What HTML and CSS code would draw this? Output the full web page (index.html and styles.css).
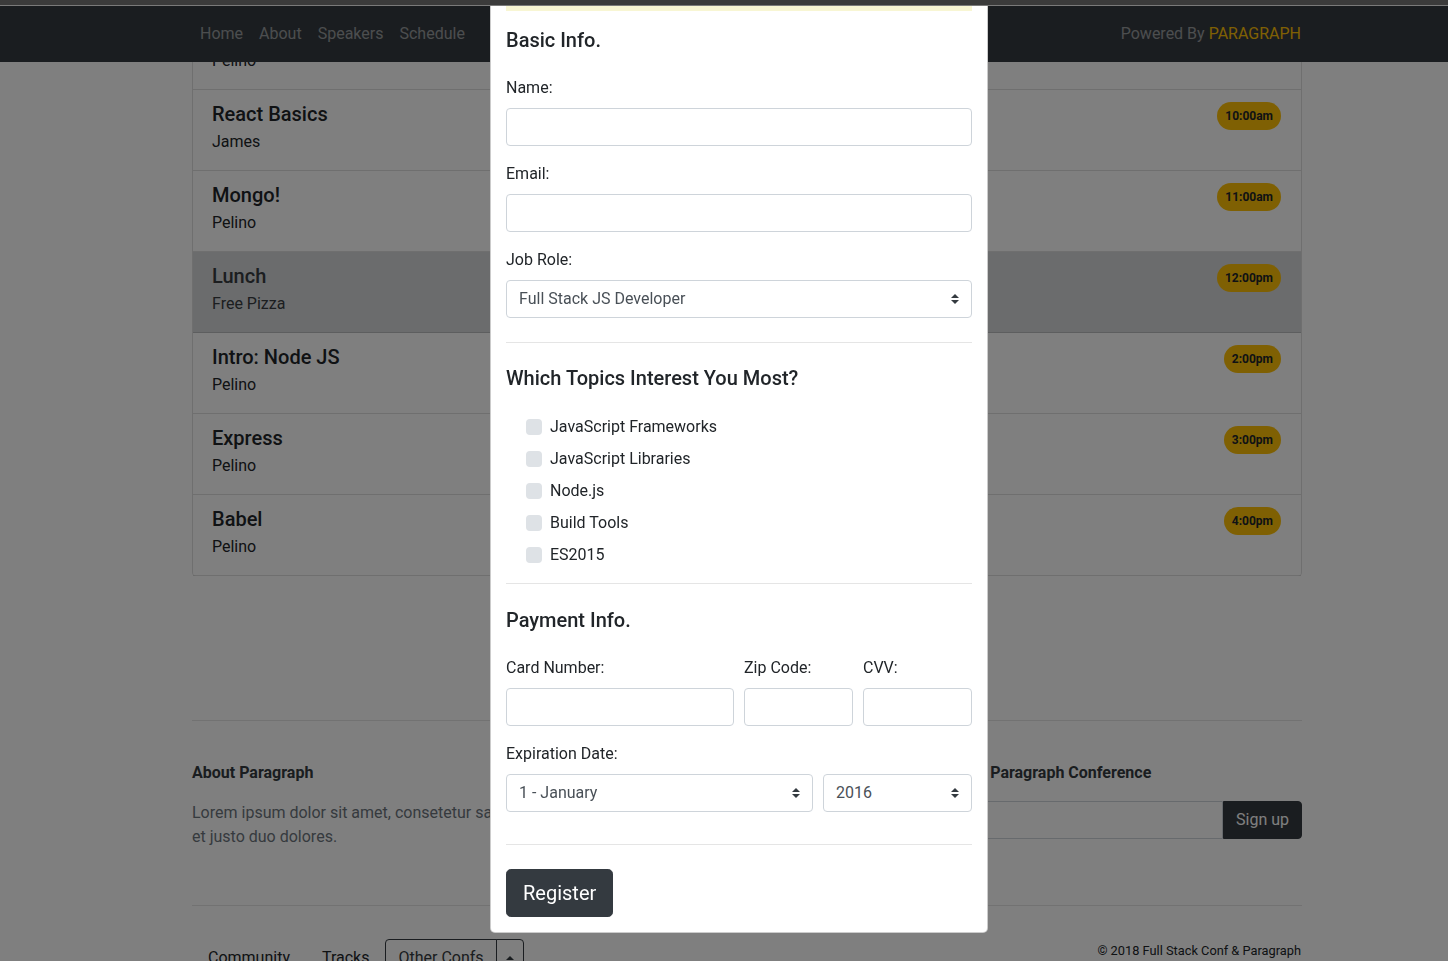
FILE: index.html
```html
<!DOCTYPE html>
<html lang="en">
<head>
<meta charset="utf-8">
<title>Full Stack Conf</title>
<link rel="stylesheet" href="styles.css">
</head>
<body class="modal-open">
<div class="top-strip"></div>
<nav class="navbar">
  <div class="container nav-inner">
    <ul class="nav-links">
      <li><a href="#">Home</a></li>
      <li><a href="#">About</a></li>
      <li><a href="#">Speakers</a></li>
      <li><a href="#">Schedule</a></li>
    </ul>
    <span class="navbar-text">Powered By <span class="brand">PARAGRAPH</span></span>
  </div>
</nav>

<main class="container page">
  <ul class="schedule">
    <li class="session">
      <div class="session-info"><h5>Intro to ES6</h5><p>Pelino</p></div>
      <span class="badge">9:00am</span>
    </li>
    <li class="session">
      <div class="session-info"><h5>React Basics</h5><p>James</p></div>
      <span class="badge">10:00am</span>
    </li>
    <li class="session">
      <div class="session-info"><h5>Mongo!</h5><p>Pelino</p></div>
      <span class="badge">11:00am</span>
    </li>
    <li class="session session-break">
      <div class="session-info"><h5>Lunch</h5><p>Free Pizza</p></div>
      <span class="badge">12:00pm</span>
    </li>
    <li class="session">
      <div class="session-info"><h5>Intro: Node JS</h5><p>Pelino</p></div>
      <span class="badge">2:00pm</span>
    </li>
    <li class="session">
      <div class="session-info"><h5>Express</h5><p>Pelino</p></div>
      <span class="badge">3:00pm</span>
    </li>
    <li class="session">
      <div class="session-info"><h5>Babel</h5><p>Pelino</p></div>
      <span class="badge">4:00pm</span>
    </li>
  </ul>

  <footer class="footer">
    <hr class="footer-rule">
    <div class="footer-row">
      <div class="about">
        <h6 class="footer-heading">About Paragraph</h6>
        <p class="about-text">Lorem ipsum dolor sit amet, consetetur sadipscing elitr, sed diam nonumy eirmod tempor invidunt<br>et justo duo dolores.</p>
      </div>
      <div class="signup">
        <h6 class="footer-heading">Join Paragraph Conference</h6>
        <div class="input-group">
          <input class="signup-input" type="email" aria-label="Email">
          <button class="btn btn-dark btn-append" type="button">Sign up</button>
        </div>
      </div>
    </div>
    <hr class="footer-rule bottom-rule">
    <div class="footer-bottom">
      <nav class="footer-nav">
        <a href="#">Community</a>
        <a href="#">Tracks</a>
        <div class="btn-group">
          <button class="btn btn-outline" type="button">Other Confs</button>
          <button class="btn btn-outline btn-toggle" type="button"><span class="caret-up"></span></button>
        </div>
      </nav>
      <small class="copyright">© 2018 Full Stack Conf &amp; Paragraph</small>
    </div>
  </footer>
</main>

<div class="backdrop"></div>

<div class="modal">
  <div class="notice"></div>

  <h4 class="section-title">Basic Info.</h4>
  <div class="form-group">
    <label>Name:</label>
    <input class="form-control" type="text">
  </div>
  <div class="form-group">
    <label>Email:</label>
    <input class="form-control" type="email">
  </div>
  <div class="form-group last">
    <label>Job Role:</label>
    <div class="select">
      <span>Full Stack JS Developer</span>
      <svg class="select-arrow" width="8" height="10" viewBox="0 0 4 5"><path d="M2 0L0 2h4zm0 5L0 3h4z" fill="#343a40"/></svg>
    </div>
  </div>

  <hr class="divider d1">

  <h4 class="section-title">Which Topics Interest You Most?</h4>
  <ul class="check-list">
    <li class="check"><span class="check-box"></span><span>JavaScript Frameworks</span></li>
    <li class="check"><span class="check-box"></span><span>JavaScript Libraries</span></li>
    <li class="check"><span class="check-box"></span><span>Node.js</span></li>
    <li class="check"><span class="check-box"></span><span>Build Tools</span></li>
    <li class="check"><span class="check-box"></span><span>ES2015</span></li>
  </ul>

  <hr class="divider d2">

  <h4 class="section-title">Payment Info.</h4>
  <div class="form-group payment-row">
    <div>
      <label>Card Number:</label>
      <input class="form-control" type="text">
    </div>
    <div>
      <label>Zip Code:</label>
      <input class="form-control" type="text">
    </div>
    <div>
      <label>CVV:</label>
      <input class="form-control" type="text">
    </div>
  </div>
  <div class="form-group last">
    <label>Expiration Date:</label>
    <div class="exp-row">
      <div class="select">
        <span>1 - January</span>
        <svg class="select-arrow" width="8" height="10" viewBox="0 0 4 5"><path d="M2 0L0 2h4zm0 5L0 3h4z" fill="#343a40"/></svg>
      </div>
      <div class="select">
        <span>2016</span>
        <svg class="select-arrow" width="8" height="10" viewBox="0 0 4 5"><path d="M2 0L0 2h4zm0 5L0 3h4z" fill="#343a40"/></svg>
      </div>
    </div>
  </div>

  <hr class="divider d3">

  <button class="btn-register" type="button">Register</button>
</div>
</body>
</html>
```

FILE: styles.css
```css
* {
  box-sizing: border-box;
}

html,
body {
  margin: 0;
  height: 100%;
  overflow: hidden;
}

body {
  font-family: Roboto, "Liberation Sans", Arial, sans-serif;
  font-size: 16px;
  line-height: 24px;
  color: #212529;
  background: #fff;
}

.top-strip {
  position: fixed;
  top: 0;
  left: 0;
  right: 0;
  height: 6px;
  background: #3b3b3b;
  border-bottom: 1px solid #7a7a7a;
  z-index: 2000;
}

.container {
  width: 1110px;
  margin-left: 192px;
}

/* Navbar */
.navbar {
  position: fixed;
  top: 6px;
  left: 0;
  right: 0;
  height: 56px;
  background: #343a40;
  z-index: 1030;
}

.nav-inner {
  display: flex;
  justify-content: space-between;
  align-items: center;
  height: 56px;
  width: 1109px;
}

.nav-links {
  display: flex;
  list-style: none;
  margin: 0;
  padding: 0;
}

.nav-links a {
  display: block;
  padding: 8px;
  color: rgba(255, 255, 255, 0.5);
  text-decoration: none;
}

.navbar-text {
  color: rgba(255, 255, 255, 0.5);
}

.brand {
  color: #ffc107;
}

/* Schedule */
.page {
  padding-top: 8px;
}

.schedule {
  list-style: none;
  margin: 0;
  padding: 0;
  border: 1px solid rgba(0, 0, 0, 0.125);
  border-bottom: 0;
  border-radius: 4px;
}

.session {
  display: flex;
  justify-content: space-between;
  align-items: flex-start;
  padding: 12px 20px 12px 19px;
  border-bottom: 1px solid rgba(0, 0, 0, 0.125);
}

.session-break {
  background: #d6d8db;
  color: #383d41;
}

.session h5 {
  margin: 0 0 4px;
  font-size: 20px;
  line-height: 24px;
  font-weight: 500;
}

.session p {
  margin: 0 0 4px;
}

.badge {
  display: inline-block;
  padding: 8px;
  font-size: 12px;
  line-height: 12px;
  font-weight: 700;
  color: #212529;
  background: #ffc107;
  border-radius: 14px;
}

/* Footer */
.footer {
  margin-top: 144px;
}

.footer-rule {
  margin: 0;
  height: 0;
  border: 0;
  border-top: 1px solid rgba(0, 0, 0, 0.1);
}

.footer-row {
  display: grid;
  grid-template-columns: 730px 1fr;
  column-gap: 33px;
  margin-top: 40px;
}

.footer-heading {
  margin: 0 0 16px;
  font-size: 16px;
  line-height: 24px;
  font-weight: 700;
  color: #343a40;
}

.about-text {
  margin: 0;
  color: #6c757d;
}

.input-group {
  display: flex;
  margin-top: 1px;
}

.signup-input {
  flex: 1;
  min-width: 0;
  height: 38px;
  border: 1px solid #ced4da;
  border-radius: 4px 0 0 4px;
  background: #fff;
  font: inherit;
}

.btn {
  font-family: inherit;
  font-size: 16px;
  line-height: 24px;
  padding: 6px 12px;
  border: 1px solid transparent;
  border-radius: 4px;
  cursor: pointer;
}

.btn-dark {
  background: #343a40;
  border-color: #343a40;
  color: #fff;
}

.btn-append {
  border-radius: 0 4px 4px 0;
}

.bottom-rule {
  margin-top: 56px;
}

.footer-bottom {
  display: flex;
  justify-content: space-between;
  align-items: flex-start;
  margin-top: 32px;
}

.footer-nav {
  display: flex;
  align-items: center;
}

.footer-nav a {
  display: block;
  padding: 8px 16px;
  color: #212529;
  text-decoration: none;
}

.btn-group {
  display: flex;
}

.btn-outline {
  background: transparent;
  border-color: #343a40;
  color: #343a40;
}

.btn-group .btn-outline:first-child {
  border-radius: 4px 0 0 4px;
}

.btn-toggle {
  margin-left: -1px;
  padding: 6px 9px;
  border-radius: 0 4px 4px 0;
}

.caret-up {
  display: inline-block;
  width: 0;
  height: 0;
  vertical-align: 3px;
  border-left: 4.8px solid transparent;
  border-right: 4.8px solid transparent;
  border-bottom: 4.8px solid #343a40;
}

.copyright {
  display: block;
  font-size: 12.8px;
  line-height: 19px;
  margin-top: 3px;
  margin-right: 1px;
  color: #212529;
}

/* Backdrop + modal */
.backdrop {
  position: fixed;
  top: 0;
  left: 0;
  right: 0;
  bottom: 0;
  background: rgba(0, 0, 0, 0.5);
  z-index: 1040;
}

.modal {
  position: fixed;
  top: 6px;
  left: 490px;
  width: 498px;
  padding: 0 15px 15px;
  background: #fff;
  border: 1px solid rgba(0, 0, 0, 0.2);
  border-top: 0;
  border-radius: 0 0 5px 5px;
  z-index: 1050;
}

.notice {
  height: 5px;
  background: #f8f6d3;
}

.section-title {
  margin: 0 0 23px;
  font-size: 20px;
  line-height: 24px;
  font-weight: 500;
}

.notice + .section-title {
  margin-top: 17px;
}

.form-group {
  margin-bottom: 15px;
}

.form-group.last {
  margin-bottom: 0;
}

label {
  display: block;
  padding-top: 1px;
  margin-bottom: 8px;
}

.form-control {
  display: block;
  width: 100%;
  height: 38px;
  padding: 6px 12px;
  font: inherit;
  color: #495057;
  background: #fff;
  border: 1px solid #ced4da;
  border-radius: 4px;
}

.select {
  display: flex;
  justify-content: space-between;
  align-items: center;
  height: 38px;
  padding: 0 12px;
  color: #495057;
  background: #fff;
  border: 1px solid #ced4da;
  border-radius: 4px;
}

.select-arrow {
  flex: none;
}

.divider {
  height: 0;
  border: 0;
  border-top: 1px solid rgba(0, 0, 0, 0.1);
}

.d1 {
  margin: 24px 0 23px;
}

.d2 {
  margin: 16px 0 24px;
}

.d3 {
  margin: 32px 0 24px;
}

.check-list {
  list-style: none;
  margin: 25px 0 0;
  padding: 0 0 0 20px;
}

.check {
  display: flex;
  align-items: flex-start;
  margin-bottom: 8px;
}

.check:last-child {
  margin-bottom: 0;
}

.check-box {
  flex: none;
  width: 16px;
  height: 16px;
  margin: 4px 8px 0 0;
  background: #dee2e6;
  border-radius: 4px;
}

.payment-row {
  display: grid;
  grid-template-columns: 228px 109px 1fr;
  column-gap: 10px;
}

.exp-row {
  display: grid;
  grid-template-columns: 307px 1fr;
  column-gap: 10px;
}

.btn-register {
  display: block;
  padding: 8px 16px;
  font-family: inherit;
  font-size: 20px;
  line-height: 30px;
  color: #fff;
  background: #343a40;
  border: 1px solid #343a40;
  border-radius: 4.8px;
}
```
